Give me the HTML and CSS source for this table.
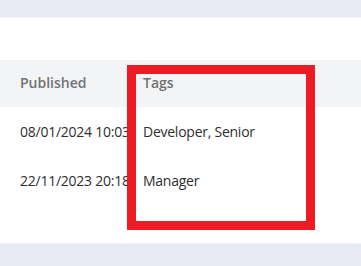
FILE: index.html
```html
<!DOCTYPE html>
<html>
<head>
<meta charset="utf-8">
<link rel="stylesheet" href="styles.css">
</head>
<body>
<div class="page">
  <div class="topbar"></div>
  <div class="spacer"></div>
  <table class="grid">
    <thead>
      <tr><th class="c1">Published</th><th class="c2">Tags</th><th class="c3"></th></tr>
    </thead>
    <tbody>
      <tr><td>08/01/2024 10:03</td><td>Developer, Senior</td><td></td></tr>
      <tr><td>22/11/2023 20:18</td><td>Manager</td><td></td></tr>
    </tbody>
  </table>
  <div class="gap"></div>
  <div class="footer"></div>
  <div class="highlight"></div>
</div>
</body>
</html>
```
FILE: styles.css
```css
* { box-sizing: border-box; }
html, body { margin: 0; padding: 0; background: #fff; }
.page {
  position: relative;
  width: 361px;
  height: 266px;
  overflow: hidden;
  font-family: "Open Sans", "Noto Sans", sans-serif;
  font-size: 14px;
  letter-spacing: -0.25px;
  color: #2e2e2e;
}
.topbar { height: 18px; background: #e8ebf3; border-bottom: 1px solid #f1f3f7; }
.spacer { height: 42px; }
.grid { border-collapse: collapse; width: 100%; table-layout: fixed; }
.grid th {
  background: #f3f4f6;
  height: 47px;
  text-align: left;
  font-weight: 600;
  font-size: 14px;
  letter-spacing: 0;
  color: #727272;
  padding: 0 0 2px 0;
}
.grid td { height: 49px; padding: 0 0 1px 0; white-space: nowrap; overflow: visible; }
.c1 { width: 143px; }
.c2 { width: 180px; }
.grid th:first-child, .grid td:first-child { padding-left: 20px; }
.gap { height: 38px; }
.footer { height: 23px; background: #e8ebf3; border-top: 1px solid #f1f3f7; }
.highlight {
  position: absolute;
  left: 127px;
  top: 65px;
  width: 188px;
  height: 165px;
  border: 9px solid #ed1c24;
}
```
